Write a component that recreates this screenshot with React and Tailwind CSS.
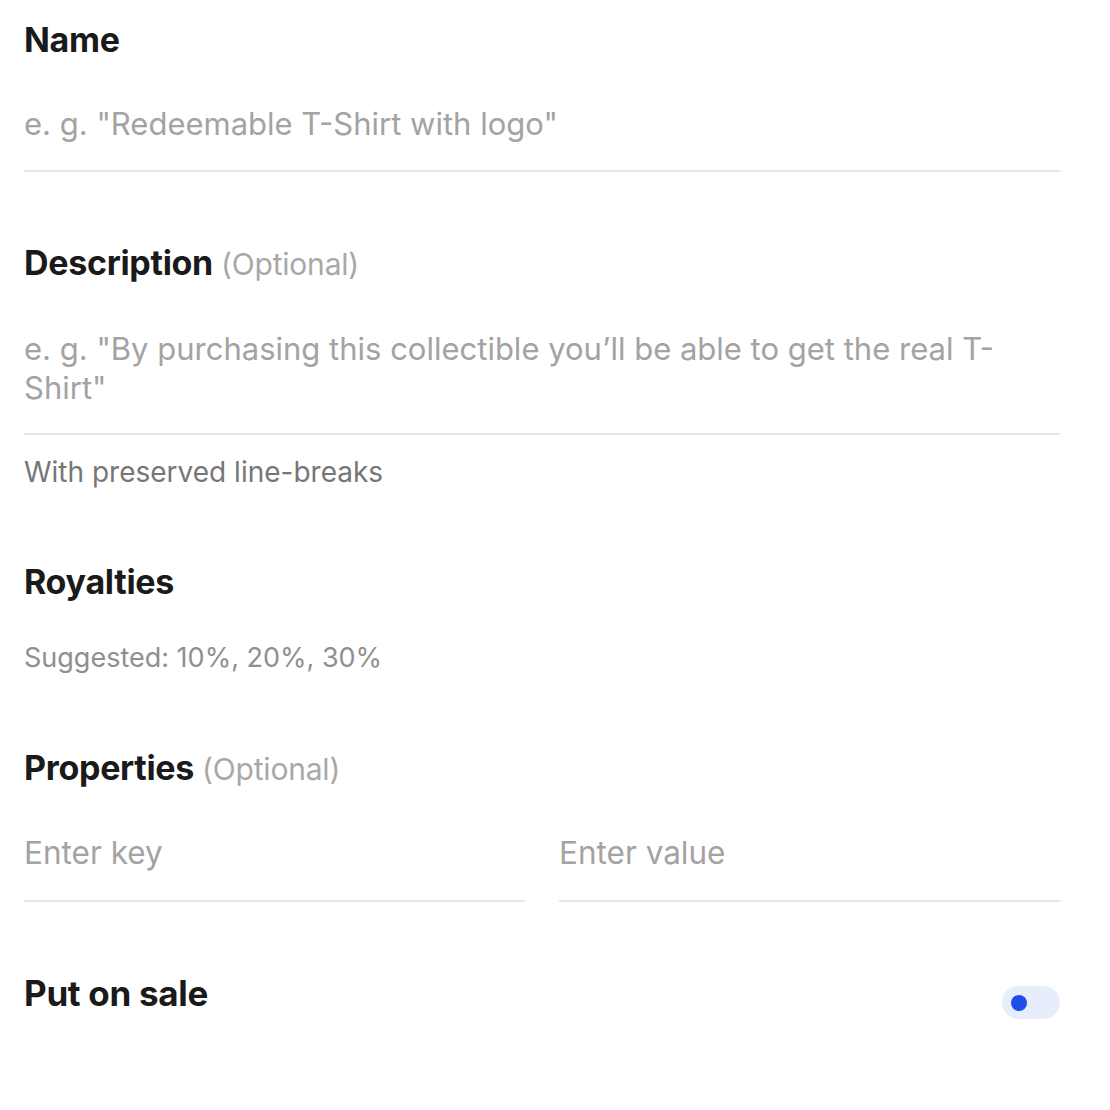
import { useState } from "react";

const Label = ({ children, optional, className = "" }) => (
	<div className={`text-[34px] leading-[36px] font-bold text-[#1a1a1a] tracking-[-0.3px] ${className}`}>
		{children}
		{optional && <span className="font-normal text-[#a8a8a8] text-[30px] tracking-[-0.2px] ml-[8px]">(Optional)</span>}
	</div>
);

const App = () => {
	const [onSale, setOnSale] = useState(false);

	return (
		<div className="w-[1110px] h-[1110px] bg-white pl-[24px] pr-[50px] pt-[22px] font-['Inter',sans-serif]">
			<Label>Name</Label>
			<input
				type="text"
				placeholder={'e. g. "Redeemable T-Shirt with logo"'}
				className="mt-[46px] w-full block pb-[26px] leading-[40px] text-[31px] text-[#1a1a1a] placeholder:text-[#a3a3a3] border-b-2 border-[#e6e6e6] outline-none"
			/>

			<Label optional className="mt-[73px]">Description</Label>
			<textarea
				rows={2}
				placeholder={'e. g. "By purchasing this collectible you\u2019ll be able to get the real T-Shirt"'}
				className="mt-[47px] w-full block resize-none pb-[26px] leading-[39px] text-[31px] text-[#1a1a1a] placeholder:text-[#a3a3a3] border-b-2 border-[#e6e6e6] outline-none"
			/>
			<p className="mt-[21px] text-[28px] leading-[32px] text-[#767676]">With preserved line-breaks</p>

			<Label className="mt-[76px]">Royalties</Label>
			<p className="mt-[42px] text-[27px] leading-[32px] text-[#8f8f8f]">Suggested: 10%, 20%, 30%</p>

			<Label optional className="mt-[76px]">Properties</Label>
			<div className="mt-[46px] grid grid-cols-2 gap-[34px]">
				<input
					type="text"
					placeholder="Enter key"
					className="w-full block pb-[27px] leading-[40px] text-[31.5px] placeholder:text-[#a3a3a3] border-b-2 border-[#e6e6e6] outline-none"
				/>
				<input
					type="text"
					placeholder="Enter value"
					className="w-full block pb-[27px] leading-[40px] text-[31.5px] placeholder:text-[#a3a3a3] border-b-2 border-[#e6e6e6] outline-none"
				/>
			</div>

			<div className="mt-[71px] flex items-start justify-between">
				<div className="text-[35px] leading-[40px] font-bold text-[#1a1a1a] tracking-[-0.3px]">Put on sale</div>
				<button
					type="button"
					onClick={() => setOnSale(!onSale)}
					className="mt-[13px] w-[58px] h-[33px] rounded-full bg-[#e8edfc] flex items-center px-[9px]"
				>
					<span className="w-[16px] h-[16px] rounded-full bg-[#1d4fe8]" />
				</button>
			</div>
		</div>
	);
};

export default App;
